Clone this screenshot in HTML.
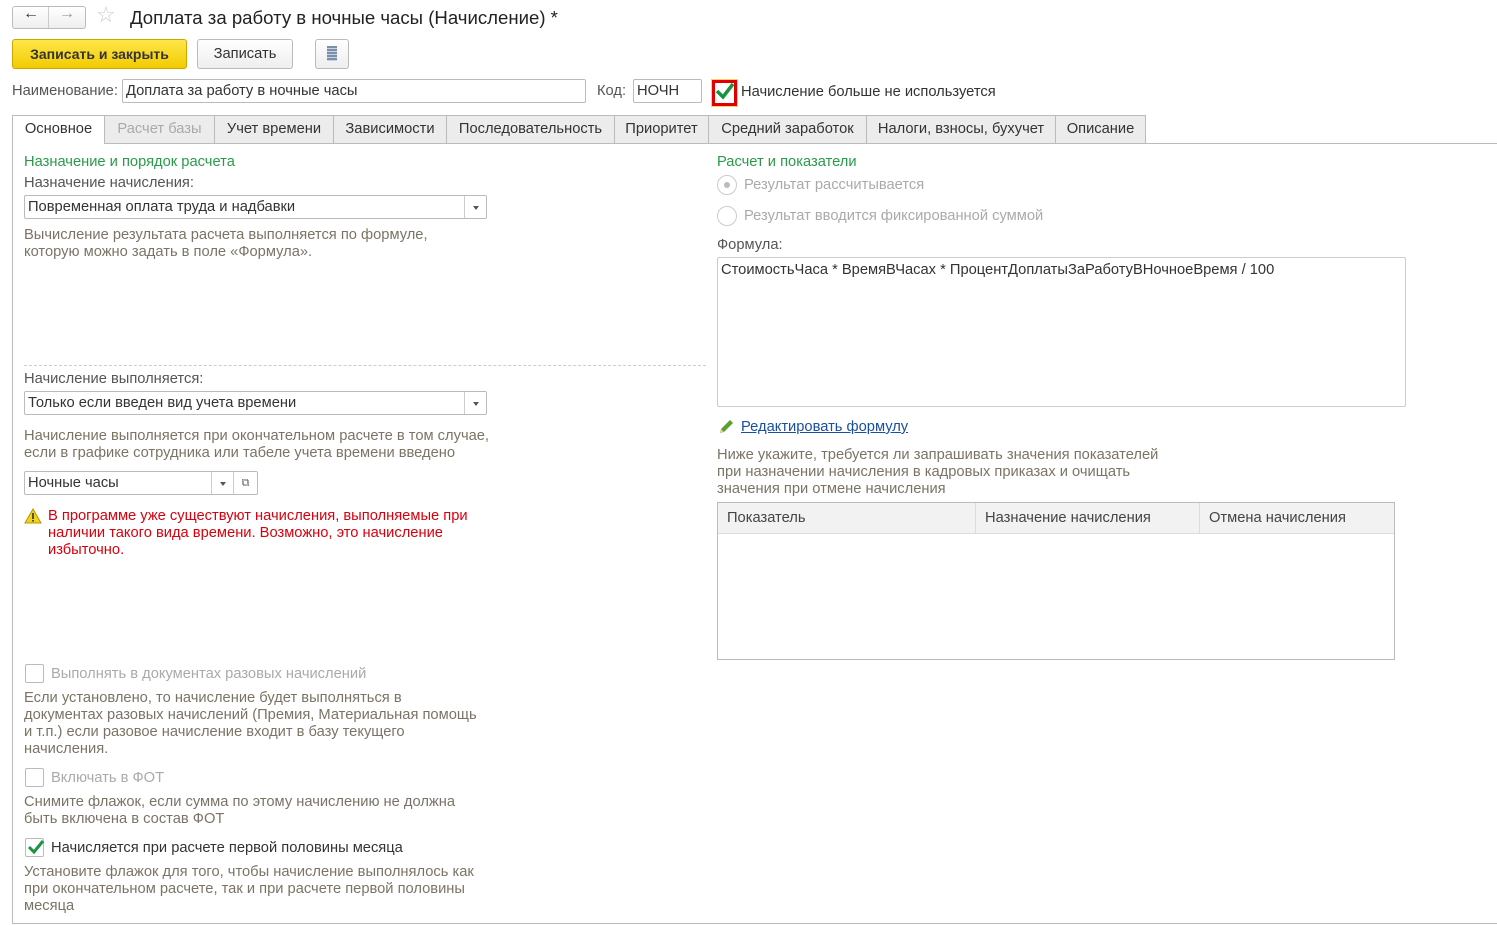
<!DOCTYPE html>
<html><head><meta charset="utf-8"><style>
*{box-sizing:border-box;margin:0;padding:0}
body{width:1497px;height:925px;background:#fff;font-family:"Liberation Sans",Arial,sans-serif;font-size:14.7px;color:#333;position:relative;overflow:hidden}
.a{position:absolute;white-space:nowrap}
.h{color:#7b7466;font-size:14.7px;line-height:17px;white-space:normal}
.g{color:#2a9a4a}
.dis{color:#aaa}
.inp{position:absolute;border:1px solid #bbb;border-radius:2px;background:#fff;height:24px;line-height:22px;padding-left:3px}
.dd{position:absolute;right:0;top:0;width:22px;height:22px;border-left:1px solid #ccc}
.dd:after{content:"";position:absolute;left:8px;top:10px;border:3px solid transparent;border-top:4px solid #555}
.tab{position:absolute;top:115px;height:29px;border:1px solid #bbb;background:#ececec;text-align:center;line-height:27px}
.cb{position:absolute;width:19px;height:19px;border:1px solid #bbb;border-radius:2px;background:#fff}
</style></head><body>
<div class="a" style="left:12px;top:6px;width:74px;height:23px;border:1px solid #bbb;border-radius:3px;background:linear-gradient(#fff,#eee)"></div>
<div class="a" style="left:48px;top:7px;width:1px;height:21px;background:#ccc"></div>
<div class="a" style="left:23px;top:5px;font-size:16px;color:#333;font-weight:bold">&#8592;</div>
<div class="a" style="left:59px;top:5px;font-size:16px;color:#999">&#8594;</div>
<div class="a" style="left:96px;top:2px;font-size:22px;color:#ccc">&#9734;</div>
<div class="a" style="left:130px;top:7px;font-size:18.6px;color:#222">Доплата за работу в ночные часы (Начисление) *</div>
<div class="a" style="left:12px;top:39px;width:175px;height:30px;border:1px solid #c9a800;border-radius:3px;background:linear-gradient(#ffe74a,#f2cb00);text-align:center;line-height:28px;font-weight:bold;color:#333;font-size:14px">Записать и закрыть</div>
<div class="a" style="left:197px;top:39px;width:96px;height:30px;border:1px solid #bbb;border-radius:3px;background:linear-gradient(#fff,#eee);text-align:center;line-height:28px">Записать</div>
<div class="a" style="left:315px;top:39px;width:34px;height:30px;border:1px solid #bbb;border-radius:3px;background:linear-gradient(#fff,#eee)"></div>
<div class="a" style="left:327px;top:46px;width:10px;height:15px;background:repeating-linear-gradient(#7a8fa8 0 2px,#c8d4e2 2px 3px)"></div>
<div class="a" style="left:12px;top:83px;color:#555">Наименование:</div>
<div class="inp" style="left:122px;top:79px;width:464px">Доплата за работу в ночные часы</div>
<div class="a" style="left:597px;top:83px;color:#555">Код:</div>
<div class="inp" style="left:633px;top:79px;width:69px">НОЧН</div>
<div class="a" style="left:712px;top:80px;width:25px;height:26px;border:3px solid #e00000;background:#fff;outline:1px solid #f3d36b"></div>
<svg class="a" style="left:714px;top:81px" width="22" height="20"><path d="M3 10 L9 16 L19 3" stroke="#1a9440" stroke-width="3.5" fill="none"/></svg>
<div class="a" style="left:741px;top:84px">Начисление больше не используется</div>
<div class="a" style="left:12px;top:143px;width:1485px;height:1px;background:#bbb"></div>
<div class="tab" style="left:12px;width:93px;background:#fff;border-bottom-color:#fff">Основное</div>
<div class="tab dis" style="left:104px;width:111px">Расчет базы</div>
<div class="tab" style="left:214px;width:120px">Учет времени</div>
<div class="tab" style="left:333px;width:114px">Зависимости</div>
<div class="tab" style="left:446px;width:169px">Последовательность</div>
<div class="tab" style="left:614px;width:95px">Приоритет</div>
<div class="tab" style="left:708px;width:159px">Средний заработок</div>
<div class="tab" style="left:866px;width:190px">Налоги, взносы, бухучет</div>
<div class="tab" style="left:1055px;width:91px">Описание</div>
<div class="a" style="left:12px;top:143px;width:1px;height:781px;background:#bbb"></div>
<div class="a" style="left:12px;top:923px;width:1485px;height:1px;background:#bbb"></div>
<div class="a g" style="left:24px;top:154px">Назначение и порядок расчета</div>
<div class="a" style="left:24px;top:175px;color:#555">Назначение начисления:</div>
<div class="inp" style="left:24px;top:195px;width:463px">Повременная оплата труда и надбавки<div class="dd"></div></div>
<div class="a h" style="left:24px;top:227px;width:500px">Вычисление результата расчета выполняется по формуле,<br>которую можно задать в поле «Формула».</div>
<div class="a" style="left:24px;top:365px;width:682px;border-top:1px dashed #ccc"></div>
<div class="a" style="left:24px;top:371px;color:#555">Начисление выполняется:</div>
<div class="inp" style="left:24px;top:391px;width:463px">Только если введен вид учета времени<div class="dd"></div></div>
<div class="a h" style="left:24px;top:428px;width:500px">Начисление выполняется при окончательном расчете в том случае,<br>если в графике сотрудника или табеле учета времени введено</div>
<div class="inp" style="left:24px;top:471px;width:234px">Ночные часы<div class="dd" style="right:24px"></div><div style="position:absolute;right:0;top:0;width:24px;height:22px;border-left:1px solid #ccc;font-size:11px;text-align:center;color:#666">&#10697;</div></div>
<svg class="a" style="left:24px;top:508px" width="18" height="16"><path d="M9 1 L17 15 L1 15 Z" fill="#f4d21c" stroke="#b89500"/><rect x="8.2" y="5" width="1.6" height="6" fill="#333"/><rect x="8.2" y="12" width="1.6" height="1.6" fill="#333"/></svg>
<div class="a h" style="left:48px;top:508px;width:460px;color:#d9000d">В программе уже существуют начисления, выполняемые при<br>наличии такого вида времени. Возможно, это начисление<br>избыточно.</div>
<div class="cb" style="left:25px;top:664px"></div>
<div class="a dis" style="left:51px;top:666px">Выполнять в документах разовых начислений</div>
<div class="a h" style="left:24px;top:690px;width:500px">Если установлено, то начисление будет выполняться в<br>документах разовых начислений (Премия, Материальная помощь<br>и т.п.) если разовое начисление входит в базу текущего<br>начисления.</div>
<div class="cb" style="left:25px;top:768px"></div>
<div class="a dis" style="left:51px;top:770px">Включать в ФОТ</div>
<div class="a h" style="left:24px;top:794px;width:500px">Снимите флажок, если сумма по этому начислению не должна<br>быть включена в состав ФОТ</div>
<div class="cb" style="left:25px;top:838px"></div>
<svg class="a" style="left:26px;top:838px" width="20" height="18"><path d="M3 9 L8 14 L17 3" stroke="#1a9440" stroke-width="3" fill="none"/></svg>
<div class="a" style="left:51px;top:840px">Начисляется при расчете первой половины месяца</div>
<div class="a h" style="left:24px;top:864px;width:500px">Установите флажок для того, чтобы начисление выполнялось как<br>при окончательном расчете, так и при расчете первой половины<br>месяца</div>
<div class="a g" style="left:717px;top:154px">Расчет и показатели</div>
<div class="a" style="left:717px;top:175px;width:20px;height:20px;border:1px solid #ccc;border-radius:50%"></div>
<div class="a" style="left:724px;top:182px;width:6px;height:6px;border-radius:50%;background:#bbb"></div>
<div class="a dis" style="left:744px;top:177px">Результат рассчитывается</div>
<div class="a" style="left:717px;top:206px;width:20px;height:20px;border:1px solid #ccc;border-radius:50%"></div>
<div class="a dis" style="left:744px;top:208px">Результат вводится фиксированной суммой</div>
<div class="a" style="left:717px;top:237px;color:#555">Формула:</div>
<div class="a" style="left:717px;top:257px;width:689px;height:150px;border:1px solid #ccc;border-radius:2px;padding:4px 3px">СтоимостьЧаса * ВремяВЧасах * ПроцентДоплатыЗаРаботуВНочноеВремя / 100</div>
<svg class="a" style="left:718px;top:419px" width="16" height="16"><path d="M2 14 L3 10 L12 1 L15 4 L6 13 Z" fill="#5aa02c"/><path d="M2 14 L3 10 L6 13 Z" fill="#e8c48a"/></svg>
<div class="a" style="left:741px;top:419px;color:#1a4fa0;text-decoration:underline">Редактировать формулу</div>
<div class="a h" style="left:717px;top:447px;width:500px">Ниже укажите, требуется ли запрашивать значения показателей<br>при назначении начисления в кадровых приказах и очищать<br>значения при отмене начисления</div>
<div class="a" style="left:717px;top:502px;width:678px;height:158px;border:1px solid #bbb"></div>
<div class="a" style="left:718px;top:503px;width:676px;height:31px;background:#f2f2f2;border-bottom:1px solid #ddd"></div>
<div class="a" style="left:975px;top:503px;width:1px;height:31px;background:#ddd"></div>
<div class="a" style="left:1199px;top:503px;width:1px;height:31px;background:#ddd"></div>
<div class="a" style="left:727px;top:510px;color:#444">Показатель</div>
<div class="a" style="left:985px;top:510px;color:#444">Назначение начисления</div>
<div class="a" style="left:1209px;top:510px;color:#444">Отмена начисления</div>
</body></html>
